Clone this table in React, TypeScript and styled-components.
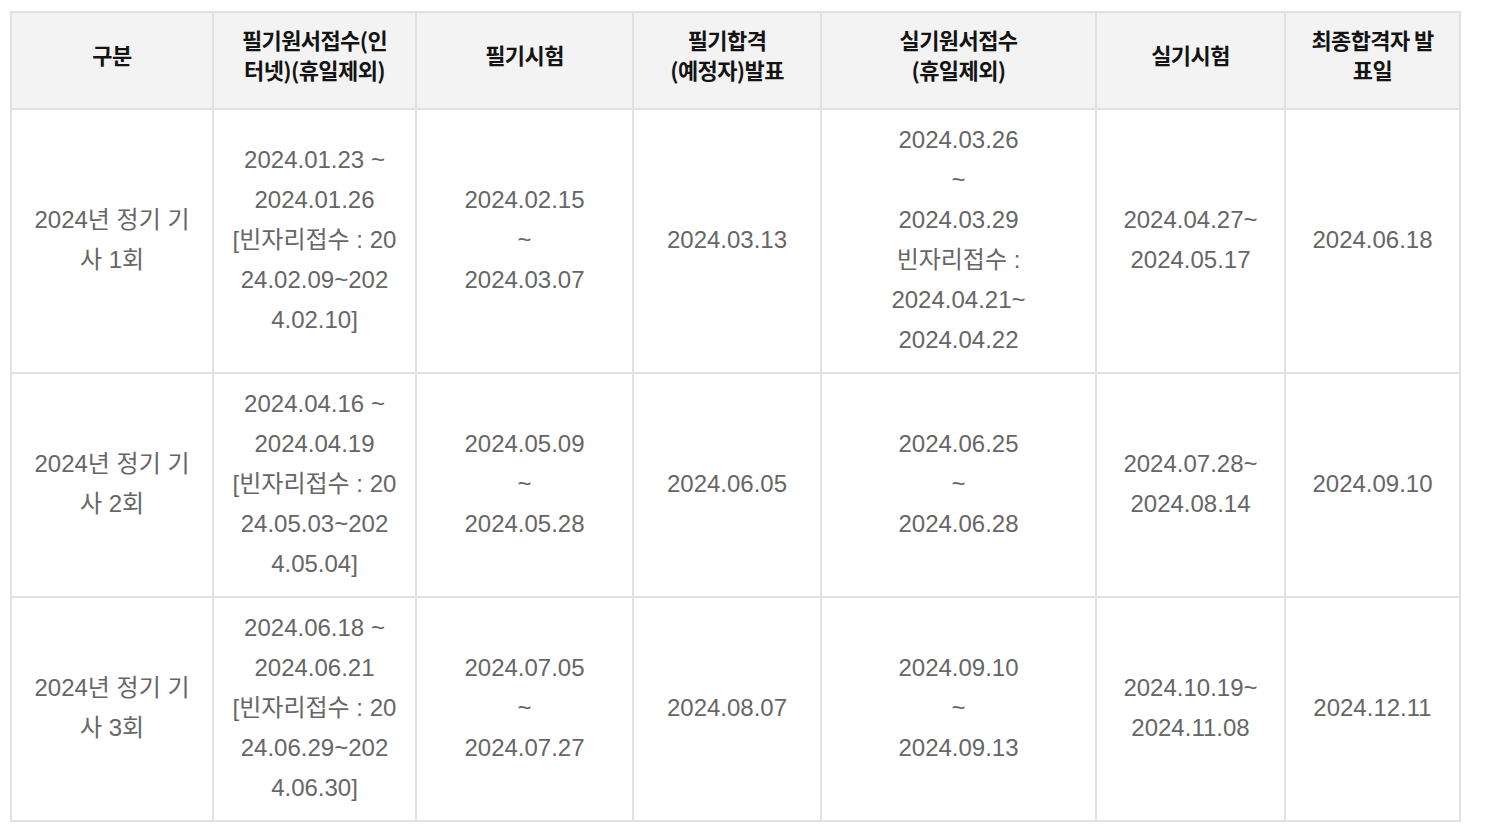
import React from "react";
import styled, { createGlobalStyle } from "styled-components";

const Global = createGlobalStyle`
  html, body { margin: 0; padding: 0; background: #fff; }
  body { font-family: "Liberation Sans", "Noto Sans CJK KR", sans-serif; }
`;

const Page = styled.div`
  padding: 11px 0 0 10px;
`;

const Table = styled.table`
  border-collapse: collapse;
  table-layout: fixed;
  width: 1449px;
`;

const HeadCell = styled.th`
  background: #f3f3f3;
  border: 2px solid #e1e1e1;
  padding: 11px 4px 24px;
  font-family: "Noto Sans CJK KR", "Liberation Sans", sans-serif;
  font-weight: 700;
  font-size: 22px;
  line-height: 30px;
  letter-spacing: -0.6px;
  color: #141414;
  text-align: center;
  vertical-align: middle;
`;

const Cell = styled.td`
  border: 2px solid #e1e1e1;
  padding: 10px 4px 12px;
  font-family: "Liberation Sans", "Noto Sans CJK KR", sans-serif;
  font-size: 24px;
  line-height: 40px;
  color: #666;
  text-align: center;
  vertical-align: middle;
`;

const Line = styled.span`
  display: block;
  white-space: nowrap;
`;

const widths = [202, 203, 217, 188, 275, 189, 175];

const headers: string[][] = [
  ["구분"],
  ["필기원서접수(인", "터넷)(휴일제외)"],
  ["필기시험"],
  ["필기합격", "(예정자)발표"],
  ["실기원서접수", "(휴일제외)"],
  ["실기시험"],
  ["최종합격자 발", "표일"],
];

const rows: string[][][] = [
  [
    ["2024년 정기 기", "사 1회"],
    ["2024.01.23 ~", "2024.01.26", "[빈자리접수 : 20", "24.02.09~202", "4.02.10]"],
    ["2024.02.15", "~", "2024.03.07"],
    ["2024.03.13"],
    ["2024.03.26", "~", "2024.03.29", "빈자리접수 :", "2024.04.21~", "2024.04.22"],
    ["2024.04.27~", "2024.05.17"],
    ["2024.06.18"],
  ],
  [
    ["2024년 정기 기", "사 2회"],
    ["2024.04.16 ~", "2024.04.19", "[빈자리접수 : 20", "24.05.03~202", "4.05.04]"],
    ["2024.05.09", "~", "2024.05.28"],
    ["2024.06.05"],
    ["2024.06.25", "~", "2024.06.28"],
    ["2024.07.28~", "2024.08.14"],
    ["2024.09.10"],
  ],
  [
    ["2024년 정기 기", "사 3회"],
    ["2024.06.18 ~", "2024.06.21", "[빈자리접수 : 20", "24.06.29~202", "4.06.30]"],
    ["2024.07.05", "~", "2024.07.27"],
    ["2024.08.07"],
    ["2024.09.10", "~", "2024.09.13"],
    ["2024.10.19~", "2024.11.08"],
    ["2024.12.11"],
  ],
];

export default function App() {
  return (
    <Page>
      <Global />
      <Table>
        <colgroup>
          {widths.map((w, i) => (
            <col key={i} style={{ width: w }} />
          ))}
        </colgroup>
        <thead>
          <tr>
            {headers.map((h, i) => (
              <HeadCell key={i}>
                {h.map((l, j) => (
                  <Line key={j}>{l}</Line>
                ))}
              </HeadCell>
            ))}
          </tr>
        </thead>
        <tbody>
          {rows.map((r, i) => (
            <tr key={i}>
              {r.map((c, j) => (
                <Cell key={j}>
                  {c.map((l, k) => (
                    <Line key={k}>{l}</Line>
                  ))}
                </Cell>
              ))}
            </tr>
          ))}
        </tbody>
      </Table>
    </Page>
  );
}
